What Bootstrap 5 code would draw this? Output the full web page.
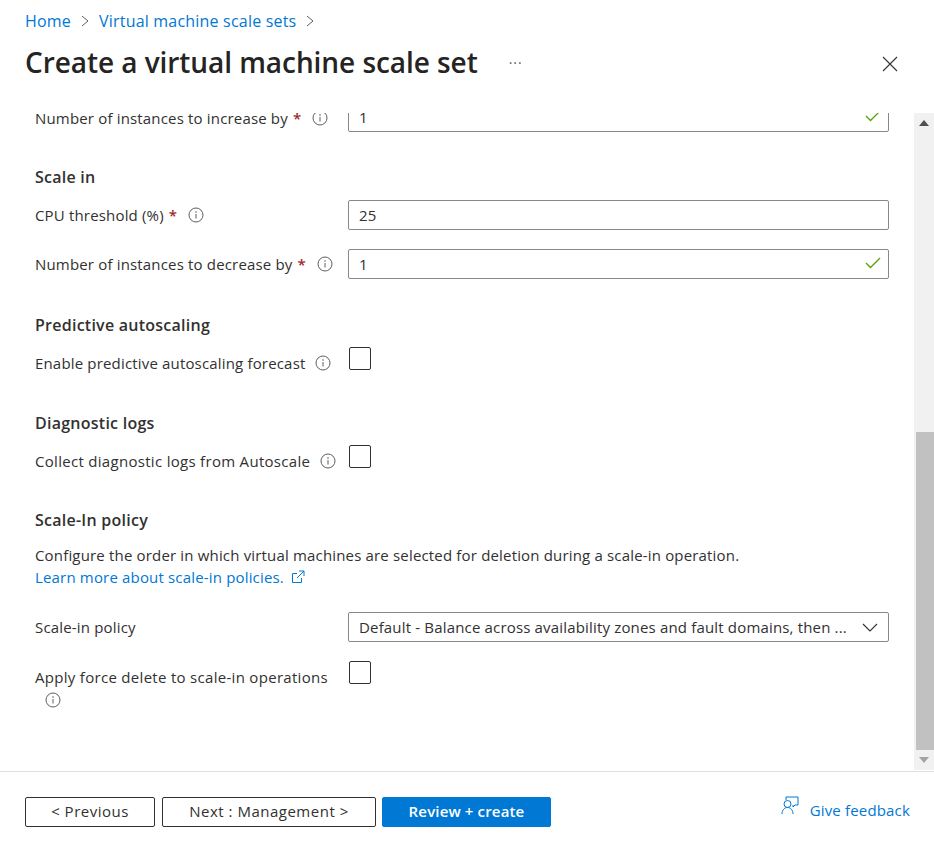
<!doctype html>
<html lang="en">
  <head>
    <meta charset="utf-8">
    <meta name="viewport" content="width=device-width, initial-scale=1">
    <title>Create a virtual machine scale set</title>
    <link href="https://cdn.jsdelivr.net/npm/bootstrap@5.3.0/dist/css/bootstrap.min.css" rel="stylesheet">
    <style>
      html, body { height: 848px; overflow: hidden; }
      body { font-family: "Open Sans", "Noto Sans", sans-serif; font-size: 15px; letter-spacing: .17px; color: #323130; background: #fff; }
      a { color: #0078d4; text-decoration: none; }
      svg { display: block; flex: none; }
      .blade-head { height: 113px; padding: 10px 36px 0 25px; }
      .crumbs { font-size: 16px; letter-spacing: .2px; line-height: 22px; margin: 0; }
      .crumb-sep { margin: 0 10px; }
      .blade-title { font-size: 28px; letter-spacing: -.06px; font-weight: 600; line-height: 38px; margin: 11px 0 0; color: #252423; }
      .more-dots { margin: 12px 0 0 31px; color: #605e5c; font-size: 14px; letter-spacing: 1px; }
      .close-x { margin-left: auto; margin-top: 14px; }
      .blade-body { height: 657px; }
      .scroll-pane { overflow: hidden; padding: 0 25px 0 35px; width: 914px; }
      .first-row { margin-top: -11px; }
      .field-row { display: flex; align-items: center; min-height: 30px; }
      .field-label { flex: 0 0 313px; display: flex; align-items: center; line-height: 22px; }
      .first-row .field-label { padding-top: 2px; }
      .wide-label { letter-spacing: .3px; }
      .req { color: #a4262c; font-weight: 600; margin-left: 5px; }
      .tip { margin-left: 10px; }
      .req + .tip { margin-left: 11px; }
      .field-box { position: relative; flex: 1; }
      .field-box .form-control, .field-box .form-select { height: 30px; min-height: 30px; padding: 0 10px; border: 1px solid #8a8886; border-radius: 2px; font-size: 15px; letter-spacing: .17px; color: #323130; box-shadow: none; }
      .field-box .form-select { background-image: none; padding-right: 36px; text-overflow: ellipsis; white-space: nowrap; overflow: hidden; }
      .ok-mark, .down-mark { position: absolute; top: 8px; right: 8px; pointer-events: none; }
      .down-mark { top: 11px; right: 11px; }
      .sec-title { font-size: 16px; letter-spacing: .25px; font-weight: 600; line-height: 20px; margin: 0; color: #323130; }
      .check-row { display: flex; align-items: flex-start; }
      .check-row .field-label { padding-top: 5px; }
      .check-row .check-box[type=checkbox] { flex: none; width: 22px; height: 23px; margin: 0 0 0 1px; border: 1px solid #323130; border-radius: 2px; background: #fff; box-shadow: none; }
      .apply-label { display: block; padding-right: 10px; }
      .apply-label .tip { margin: 4px 0 0 10px; }
      .intro-text { line-height: 22px; margin: 0; }
      .ext-icon { display: inline-block; vertical-align: -1px; margin-left: 3px; }
      .sb-track { width: 20px; background: #f1f1f1; }
      .sb-arrow { height: 20px; }
      .sb-thumb { height: 318px; margin-left: 2px; background: #c1c1c1; }
      .blade-foot { border-top: 1px solid #e1dfdd; height: 78px; margin-top: 1px; padding: 25px 24px 0 25px; }
      .foot-btn { height: 30px; padding: 0 0 2px; font-size: 15px; letter-spacing: .5px; line-height: 26px; border-radius: 2px; border: 1px solid #323130; color: #323130; background: #fff; }
      .prev-btn { width: 130px; }
      .next-btn { width: 214px; margin-left: 7px; }
      .create-btn { width: 169px; margin-left: 6px; background: #0078d4; border-color: #0078d4; color: #fff; font-weight: 600; letter-spacing: .15px; }
      .feedback { margin-left: auto; margin-top: 2px; display: flex; align-items: center; gap: 11px; }
      .feedback svg { margin-top: -8px; }
    </style>
  </head>
  <body>
    <header class="blade-head">
      <nav class="crumbs d-flex align-items-center">
        <a href="#">Home</a>
        <svg class="crumb-sep" width="8" height="12" viewBox="0 0 8 12"><path d="M1 1l6 5-6 5" fill="none" stroke="#605e5c"/></svg>
        <a href="#">Virtual machine scale sets</a>
        <svg class="crumb-sep" width="8" height="12" viewBox="0 0 8 12"><path d="M1 1l6 5-6 5" fill="none" stroke="#605e5c"/></svg>
      </nav>
      <div class="d-flex align-items-center">
        <h1 class="blade-title">Create a virtual machine scale set</h1>
        <span class="more-dots">···</span>
        <svg class="close-x" width="16" height="16" viewBox="0 0 16 16"><path d="M1 1l14 14M15 1L1 15" stroke="#323130" stroke-width="1.1"/></svg>
      </div>
    </header>

    <div class="blade-body d-flex">
      <main class="scroll-pane">
        <div class="field-row first-row">
          <label class="field-label">Number of instances to increase by<span class="req">*</span>
            <svg class="tip" width="16" height="16" viewBox="0 0 16 16"><circle cx="8" cy="8" r="7" fill="none" stroke="#605e5c"/><path d="M8 7v4.500" stroke="#605e5c"/><circle cx="8" cy="5" r=".8" fill="#605e5c"/></svg>
          </label>
          <div class="field-box">
            <input class="form-control" type="text" value="1">
            <svg class="ok-mark" width="16" height="12" viewBox="0 0 16 12"><path d="M1 6l4.500 4.500L15 1" fill="none" stroke="#57a300" stroke-width="1.300"/></svg>
          </div>
        </div>

        <h2 class="sec-title" style="margin-top:35px">Scale in</h2>
        <div class="field-row" style="margin-top:13px">
          <label class="field-label">CPU threshold (%)<span class="req">*</span>
            <svg class="tip" width="16" height="16" viewBox="0 0 16 16"><circle cx="8" cy="8" r="7" fill="none" stroke="#605e5c"/><path d="M8 7v4.500" stroke="#605e5c"/><circle cx="8" cy="5" r=".8" fill="#605e5c"/></svg>
          </label>
          <div class="field-box"><input class="form-control" type="text" value="25"></div>
        </div>
        <div class="field-row" style="margin-top:19px">
          <label class="field-label">Number of instances to decrease by<span class="req">*</span>
            <svg class="tip" width="16" height="16" viewBox="0 0 16 16"><circle cx="8" cy="8" r="7" fill="none" stroke="#605e5c"/><path d="M8 7v4.500" stroke="#605e5c"/><circle cx="8" cy="5" r=".8" fill="#605e5c"/></svg>
          </label>
          <div class="field-box">
            <input class="form-control" type="text" value="1">
            <svg class="ok-mark" width="16" height="12" viewBox="0 0 16 12"><path d="M1 6l4.500 4.500L15 1" fill="none" stroke="#57a300" stroke-width="1.300"/></svg>
          </div>
        </div>

        <h2 class="sec-title" style="margin-top:36px">Predictive autoscaling</h2>
        <div class="check-row" style="margin-top:12px">
          <label class="field-label">Enable predictive autoscaling forecast
            <svg class="tip" width="16" height="16" viewBox="0 0 16 16"><circle cx="8" cy="8" r="7" fill="none" stroke="#605e5c"/><path d="M8 7v4.500" stroke="#605e5c"/><circle cx="8" cy="5" r=".8" fill="#605e5c"/></svg>
          </label>
          <input class="check-box form-check-input" type="checkbox">
        </div>

        <h2 class="sec-title" style="margin-top:39px">Diagnostic logs</h2>
        <div class="check-row" style="margin-top:12px">
          <label class="field-label wide-label">Collect diagnostic logs from Autoscale
            <svg class="tip" width="16" height="16" viewBox="0 0 16 16"><circle cx="8" cy="8" r="7" fill="none" stroke="#605e5c"/><path d="M8 7v4.500" stroke="#605e5c"/><circle cx="8" cy="5" r=".8" fill="#605e5c"/></svg>
          </label>
          <input class="check-box form-check-input" type="checkbox">
        </div>

        <h2 class="sec-title" style="margin-top:38px">Scale-In policy</h2>
        <p class="intro-text" style="margin-top:14px">Configure the order in which virtual machines are selected for deletion during a scale-in operation.<br>
          <a href="#">Learn more about scale-in policies.
            <svg class="ext-icon" width="14" height="14" viewBox="0 0 14 14"><path d="M10.500 8v4.500h-9v-9H6M8 1h5v5M13 1L6 8" fill="none" stroke="#0078d4"/></svg>
          </a>
        </p>
        <div class="field-row" style="margin-top:24px">
          <label class="field-label">Scale-in policy</label>
          <div class="field-box">
            <select class="form-select"><option>Default - Balance across availability zones and fault domains, then ...</option></select>
            <svg class="down-mark" width="16" height="10" viewBox="0 0 16 10"><path d="M1 1l7 7 7-7" fill="none" stroke="#323130" stroke-width="1.100"/></svg>
          </div>
        </div>
        <div class="check-row" style="margin-top:19px">
          <label class="field-label apply-label wide-label">Apply force delete to scale-in operations
            <svg class="tip" width="16" height="16" viewBox="0 0 16 16"><circle cx="8" cy="8" r="7" fill="none" stroke="#605e5c"/><path d="M8 7v4.500" stroke="#605e5c"/><circle cx="8" cy="5" r=".8" fill="#605e5c"/></svg>
          </label>
          <input class="check-box form-check-input" type="checkbox">
        </div>
      </main>

      <div class="sb-track d-flex flex-column">
        <div class="sb-arrow d-flex align-items-center justify-content-center"><svg width="10" height="6" viewBox="0 0 10 6"><path d="M5 0l5 6H0z" fill="#505050"/></svg></div>
        <div class="flex-grow-1"></div>
        <div class="sb-thumb"></div>
        <div class="sb-arrow d-flex align-items-center justify-content-center"><svg width="10" height="6" viewBox="0 0 10 6"><path d="M0 0h10L5 6z" fill="#a3a3a3"/></svg></div>
      </div>
    </div>

    <footer class="blade-foot d-flex align-items-start">
      <button class="btn foot-btn prev-btn" type="button">&lt; Previous</button>
      <button class="btn foot-btn next-btn" type="button">Next : Management &gt;</button>
      <button class="btn foot-btn create-btn" type="button">Review + create</button>
      <a class="feedback" href="#">
        <svg width="18" height="20" viewBox="0 0 18 20"><path d="M5 4V1h12v8h-3l-2 2V9" fill="none" stroke="#0078d4"/><circle cx="6.500" cy="8" r="3.500" fill="#fff" stroke="#0078d4"/><path d="M1 18c0-4 2.500-6.500 5.500-6.500s5.500 2.500 5.500 6.500" fill="none" stroke="#0078d4"/></svg>
        <span>Give feedback</span>
      </a>
    </footer>

    <script src="https://cdn.jsdelivr.net/npm/bootstrap@5.3.0/dist/js/bootstrap.bundle.min.js"></script>
  </body>
</html>
